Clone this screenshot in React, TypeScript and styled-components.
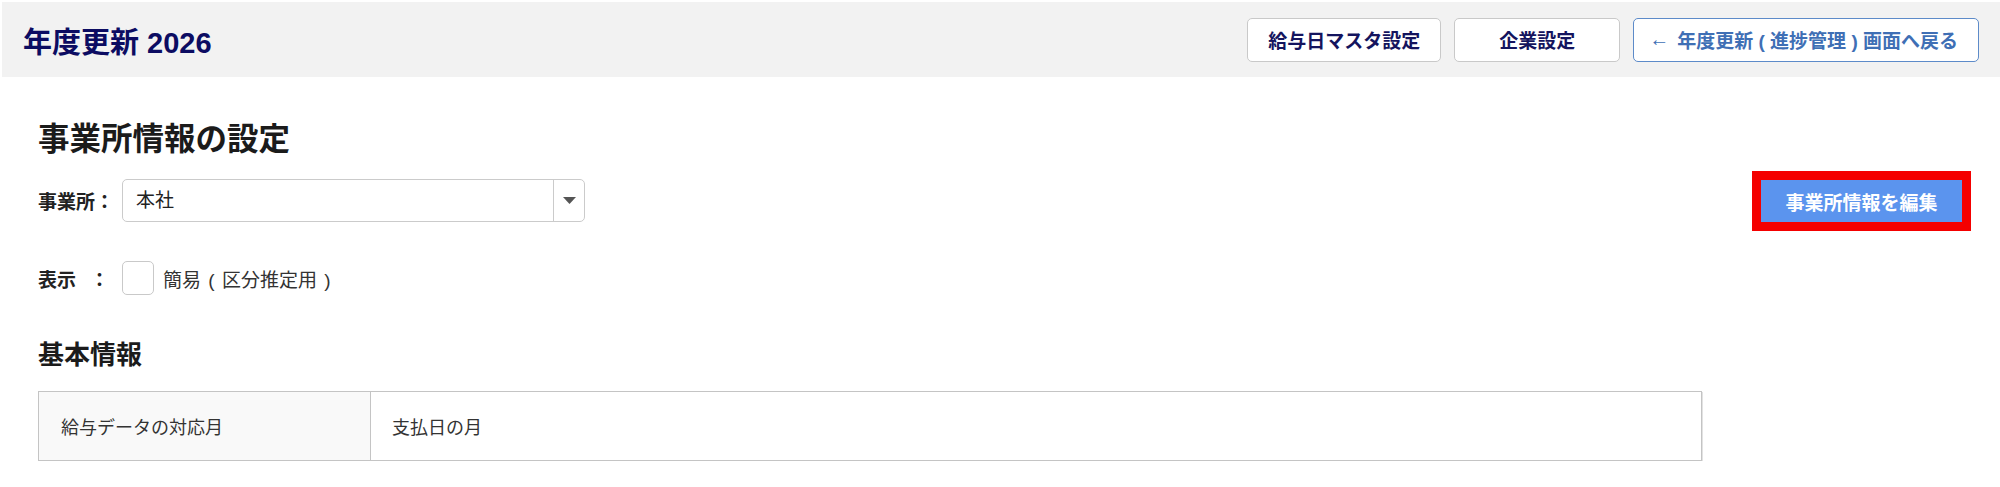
import React, { useState } from 'react';
import styled, { createGlobalStyle } from 'styled-components';

const GlobalStyle = createGlobalStyle`
    html, body {
        margin: 0;
        padding: 0;
        background: #fff;
    }
    body {
        font-family: "Liberation Sans", "Noto Sans CJK JP", sans-serif;
        color: #222;
    }
    * {
        box-sizing: border-box;
    }
`;

export default function App() {
    const [office, setOffice] = useState('本社');
    const [simple, setSimple] = useState(false);

    return (
        <>
            <GlobalStyle />
            <Page>
                <Header>
                    <PageTitle>年度更新 2026</PageTitle>
                    <HeaderButtons>
                        <HeaderButton>給与日マスタ設定</HeaderButton>
                        <HeaderButton $minWidth={166}>企業設定</HeaderButton>
                        <BackButton>
                            <span>←</span>
                            年度更新 ( 進捗管理 ) 画面へ戻る
                        </BackButton>
                    </HeaderButtons>
                </Header>
                <Content>
                    <SectionTitle>事業所情報の設定</SectionTitle>
                    <OfficeRow>
                        <Field>
                            <FieldLabel>事業所：</FieldLabel>
                            <SelectBox>
                                <SelectValue value={office} onChange={(e) => setOffice(e.target.value)}>
                                    <option>本社</option>
                                </SelectValue>
                                <SelectArrow>
                                    <svg width="13" height="7" viewBox="0 0 13 7">
                                        <path d="M0 0 L13 0 L6.5 7 Z" fill="#555" />
                                    </svg>
                                </SelectArrow>
                            </SelectBox>
                        </Field>
                        <EditButton>事業所情報を編集</EditButton>
                    </OfficeRow>
                    <DisplayRow>
                        <FieldLabel>表示<Colon>：</Colon></FieldLabel>
                        <CheckBox $checked={simple} onClick={() => setSimple((s) => !s)} />
                        <CheckText>簡易 ( 区分推定用 )</CheckText>
                    </DisplayRow>
                    <SubTitle>基本情報</SubTitle>
                    <InfoTable>
                        <tbody>
                            <tr>
                                <HeadCell>給与データの対応月</HeadCell>
                                <ValueCell>支払日の月</ValueCell>
                            </tr>
                        </tbody>
                    </InfoTable>
                </Content>
            </Page>
        </>
    );
}

const Page = styled.div`
    padding: 2px 0 0 2px;
`;

const Header = styled.header`
    height: 75px;
    background: #f2f2f2;
    display: flex;
    align-items: center;
    justify-content: space-between;
    padding: 0 21px 0 21px;
`;

const PageTitle = styled.h1`
    margin: 0;
    font-size: 29px;
    font-weight: 700;
    color: #0c0c62;
`;

const HeaderButtons = styled.div`
    display: flex;
    gap: 13px;
`;

const HeaderButton = styled.button<{ $minWidth?: number }>`
    height: 44px;
    min-width: ${(p) => (p.$minWidth ? `${p.$minWidth}px` : 'auto')};
    padding: 0 20px;
    background: #fff;
    border: 1px solid #c9c9c9;
    border-radius: 5px;
    font-family: inherit;
    font-size: 19px;
    font-weight: 700;
    color: #14145e;
    cursor: pointer;
`;

const BackButton = styled(HeaderButton)`
    border-color: #5d8bc9;
    color: #3f6fb5;
    padding: 0 20px 0 15px;
    display: flex;
    align-items: center;
    gap: 8px;

    span {
        font-weight: 400;
        font-size: 20px;
    }
`;

const Content = styled.main`
    padding: 0 38px 0 36px;
`;

const SectionTitle = styled.h2`
    margin: 42px 0 0;
    font-size: 31.5px;
    font-weight: 700;
    line-height: 40px;
    color: #1b1b1b;
`;

const OfficeRow = styled.div`
    display: flex;
    align-items: center;
    justify-content: space-between;
    margin-top: 19px;
`;

const Field = styled.div`
    display: flex;
    align-items: center;
`;

const FieldLabel = styled.label`
    width: 84px;
    font-size: 19px;
    font-weight: 700;
    color: #222;
    white-space: nowrap;
`;

const Colon = styled.span`
    margin-left: 14px;
`;

const SelectBox = styled.div`
    position: relative;
    width: 463px;
    height: 43px;
    border: 1px solid #cbcbcb;
    border-radius: 5px;
    background: #fff;
`;

const SelectValue = styled.select`
    appearance: none;
    width: 100%;
    height: 100%;
    border: none;
    background: transparent;
    padding: 0 40px 0 13px;
    font-family: inherit;
    font-size: 19px;
    color: #222;
    outline: none;
`;

const SelectArrow = styled.span`
    position: absolute;
    top: 0;
    right: 0;
    bottom: 0;
    width: 31px;
    border-left: 1px solid #cbcbcb;
    display: flex;
    align-items: center;
    justify-content: center;
    pointer-events: none;
`;

const EditButton = styled.button`
    width: 201px;
    height: 42px;
    margin-top: 2px;
    background: #5b94ee;
    border: none;
    font-family: inherit;
    font-size: 19px;
    font-weight: 700;
    color: #fff;
    outline: 9px solid #f40000;
    cursor: pointer;
`;

const DisplayRow = styled.div`
    display: flex;
    align-items: center;
    margin-top: 39px;
`;

const CheckBox = styled.span<{ $checked: boolean }>`
    width: 32px;
    height: 34px;
    border: 1px solid #c9c9c9;
    border-radius: 5px;
    background: ${(p) => (p.$checked ? '#5b94ee' : '#fff')};
    cursor: pointer;
`;

const CheckText = styled.span`
    margin-left: 9px;
    font-size: 19px;
    word-spacing: 2px;
    color: #333;
`;

const SubTitle = styled.h3`
    margin: 44px 0 0;
    font-size: 26px;
    font-weight: 700;
    line-height: 32px;
    color: #1b1b1b;
`;

const InfoTable = styled.table`
    margin-top: 20px;
    width: 1664px;
    border-collapse: collapse;
    border: 1px solid #c4c4c4;
    box-shadow: 1px 1px 0 #e2e2e2;
`;

const HeadCell = styled.td`
    width: 332px;
    height: 69px;
    padding: 0 22px;
    background: #f9f9f9;
    border-right: 1px solid #c4c4c4;
    font-size: 18px;
    color: #333;
`;

const ValueCell = styled.td`
    padding: 0 21px;
    background: #fff;
    font-size: 18px;
    color: #333;
`;
